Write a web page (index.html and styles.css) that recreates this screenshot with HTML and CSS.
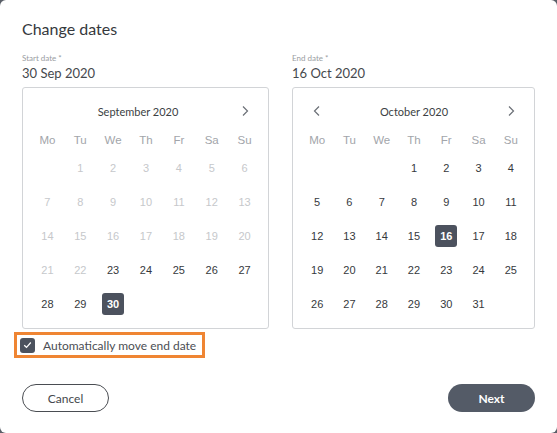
FILE: index.html
```html
<!DOCTYPE html>
<html lang="en">
<head>
<meta charset="utf-8">
<link rel="stylesheet" href="styles.css">
</head>
<body>
<div class="dialog">
  <h1 class="title">Change dates</h1>
  <div class="pickers">
    <div class="picker">
      <div class="label">Start date *</div>
      <div class="value">30 Sep 2020</div>
      <div class="cal">
        <div class="cal-head">
          <div class="month">September 2020</div>
          <span class="arrow"><svg width="8" height="12" viewBox="0 0 8 12"><path d="M2 1.5 L6.5 6 L2 10.5" fill="none" stroke="#6b6f76" stroke-width="1.2"/></svg></span>
        </div>
        <div class="grid">
          <div class="wd">Mo</div><div class="wd">Tu</div><div class="wd">We</div><div class="wd">Th</div><div class="wd">Fr</div><div class="wd">Sa</div><div class="wd">Su</div>
          <div class="d"></div><div class="d off">1</div><div class="d off">2</div><div class="d off">3</div><div class="d off">4</div><div class="d off">5</div><div class="d off">6</div>
          <div class="d off">7</div><div class="d off">8</div><div class="d off">9</div><div class="d off">10</div><div class="d off">11</div><div class="d off">12</div><div class="d off">13</div>
          <div class="d off">14</div><div class="d off">15</div><div class="d off">16</div><div class="d off">17</div><div class="d off">18</div><div class="d off">19</div><div class="d off">20</div>
          <div class="d off">21</div><div class="d off">22</div><div class="d">23</div><div class="d">24</div><div class="d">25</div><div class="d">26</div><div class="d">27</div>
          <div class="d">28</div><div class="d">29</div><div class="d"><span class="sel">30</span></div><div class="d"></div><div class="d"></div><div class="d"></div><div class="d"></div>
        </div>
      </div>
    </div>
    <div class="picker">
      <div class="label">End date *</div>
      <div class="value">16 Oct 2020</div>
      <div class="cal">
        <div class="cal-head">
          <span class="arrow"><svg width="8" height="12" viewBox="0 0 8 12"><path d="M6 1.5 L1.5 6 L6 10.5" fill="none" stroke="#6b6f76" stroke-width="1.2"/></svg></span>
          <div class="month">October 2020</div>
          <span class="arrow"><svg width="8" height="12" viewBox="0 0 8 12"><path d="M2 1.5 L6.5 6 L2 10.5" fill="none" stroke="#6b6f76" stroke-width="1.2"/></svg></span>
        </div>
        <div class="grid">
          <div class="wd">Mo</div><div class="wd">Tu</div><div class="wd">We</div><div class="wd">Th</div><div class="wd">Fr</div><div class="wd">Sa</div><div class="wd">Su</div>
          <div class="d"></div><div class="d"></div><div class="d"></div><div class="d">1</div><div class="d">2</div><div class="d">3</div><div class="d">4</div>
          <div class="d">5</div><div class="d">6</div><div class="d">7</div><div class="d">8</div><div class="d">9</div><div class="d">10</div><div class="d">11</div>
          <div class="d">12</div><div class="d">13</div><div class="d">14</div><div class="d">15</div><div class="d"><span class="sel">16</span></div><div class="d">17</div><div class="d">18</div>
          <div class="d">19</div><div class="d">20</div><div class="d">21</div><div class="d">22</div><div class="d">23</div><div class="d">24</div><div class="d">25</div>
          <div class="d">26</div><div class="d">27</div><div class="d">28</div><div class="d">29</div><div class="d">30</div><div class="d">31</div><div class="d"></div>
        </div>
      </div>
    </div>
  </div>
  <label class="auto">
    <span class="box"><svg width="9" height="8" viewBox="0 0 9 8"><path d="M1.2 4.2 L3.5 6.3 L7.8 1.5" fill="none" stroke="#fff" stroke-width="1.2"/></svg></span>
    <span class="auto-text">Automatically move end date</span>
  </label>
  <div class="actions">
    <button class="btn cancel">Cancel</button>
    <button class="btn next">Next</button>
  </div>
</div>
</body>
</html>
```

FILE: styles.css
```css
html, body {
  margin: 0;
  padding: 0;
  background: #5a5f68;
}
body {
  width: 557px;
  height: 433px;
  overflow: hidden;
}
.dialog {
  box-sizing: border-box;
  width: 557px;
  height: 433px;
  background: #fff;
  border-radius: 6px;
  padding: 19px 22px 0 22px;
  font-family: Lato, "Liberation Sans", sans-serif;
  color: #3c3f44;
}
.title {
  margin: 0;
  font-size: 16px;
  font-weight: 400;
  line-height: 20px;
  color: #35383d;
}
.pickers {
  display: grid;
  grid-template-columns: 247px 243px;
  column-gap: 23px;
  margin-top: 14px;
}
.label {
  font-size: 8px;
  line-height: 10px;
  color: #9a9da2;
}
.value {
  font-size: 13px;
  line-height: 17px;
  color: #46494e;
  margin-top: 2px;
}
.cal {
  margin-top: 5px;
  border: 1px solid #d2d4d7;
  border-radius: 3px;
  padding: 10px 7px 8px 8px;
  height: 242px;
  box-sizing: border-box;
}
.cal-head {
  display: flex;
  align-items: center;
  height: 26px;
  margin-bottom: 5px;
  padding: 0 8px;
}
.month {
  flex: 1;
  text-align: center;
  font-size: 11px;
  color: #3c3f44;
}
.arrow {
  width: 16px;
  display: flex;
  justify-content: center;
  align-items: center;
}
.grid {
  display: grid;
  grid-template-columns: repeat(7, 1fr);
  grid-template-rows: 22px repeat(5, 34px);
  font-family: "Liberation Sans", Arial, sans-serif;
  font-size: 11px;
}
.wd {
  display: flex;
  align-items: center;
  justify-content: center;
  color: #a2a5aa;
  font-size: 11.5px;
}
.d {
  display: flex;
  align-items: center;
  justify-content: center;
  color: #36393d;
}
.d.off {
  color: #c6c8cb;
}
.sel {
  width: 22px;
  height: 22px;
  border-radius: 3px;
  background: #4c525e;
  color: #fff;
  font-weight: 700;
  display: flex;
  align-items: center;
  justify-content: center;
}
.auto {
  display: inline-flex;
  align-items: center;
  gap: 8px;
  margin: 3px 0 0 -8px;
  border: 3px solid #ef8533;
  padding: 2px 6px 2px 3px;
  height: 26px;
  box-sizing: border-box;
}
.box {
  width: 15px;
  height: 15px;
  border-radius: 3px;
  background: #4c525e;
  display: flex;
  align-items: center;
  justify-content: center;
}
.auto-text {
  font-size: 12px;
  color: #4b4e54;
}
.actions {
  display: flex;
  justify-content: space-between;
  margin-top: 26px;
}
.btn {
  width: 87px;
  height: 28px;
  border-radius: 14px;
  font-family: Lato, "Liberation Sans", sans-serif;
  font-size: 12px;
  box-sizing: border-box;
  padding: 0;
}
.cancel {
  background: #fff;
  border: 1.5px solid #4a4d52;
  color: #44474c;
}
.next {
  background: #545b67;
  border: none;
  color: #fff;
  font-weight: 700;
}
```
